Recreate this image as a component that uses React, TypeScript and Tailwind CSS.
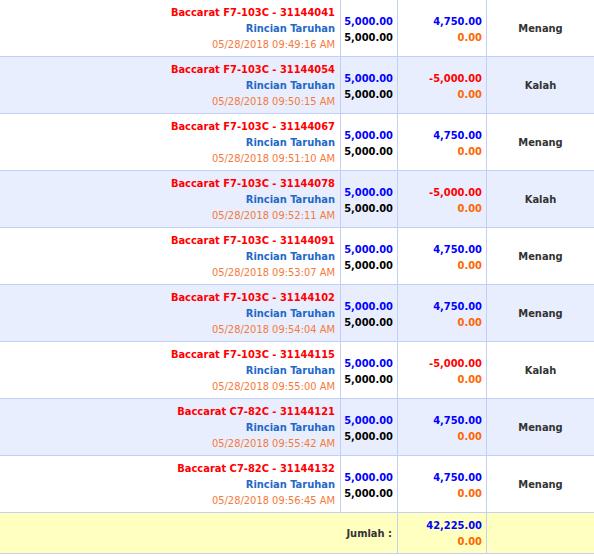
const rows = [
  { game: 'Baccarat F7-103C - 31144041', date: '05/28/2018 09:49:16 AM', win: '4,750.00', result: 'Menang' },
  { game: 'Baccarat F7-103C - 31144054', date: '05/28/2018 09:50:15 AM', win: '-5,000.00', result: 'Kalah' },
  { game: 'Baccarat F7-103C - 31144067', date: '05/28/2018 09:51:10 AM', win: '4,750.00', result: 'Menang' },
  { game: 'Baccarat F7-103C - 31144078', date: '05/28/2018 09:52:11 AM', win: '-5,000.00', result: 'Kalah' },
  { game: 'Baccarat F7-103C - 31144091', date: '05/28/2018 09:53:07 AM', win: '4,750.00', result: 'Menang' },
  { game: 'Baccarat F7-103C - 31144102', date: '05/28/2018 09:54:04 AM', win: '4,750.00', result: 'Menang' },
  { game: 'Baccarat F7-103C - 31144115', date: '05/28/2018 09:55:00 AM', win: '-5,000.00', result: 'Kalah' },
  { game: 'Baccarat C7-82C - 31144121', date: '05/28/2018 09:55:42 AM', win: '4,750.00', result: 'Menang' },
  { game: 'Baccarat C7-82C - 31144132', date: '05/28/2018 09:56:45 AM', win: '4,750.00', result: 'Menang' },
]

export default function App() {
  return (
    <div className="w-[594px] h-[556px] bg-white overflow-hidden font-['DejaVu_Sans_Condensed','DejaVu_Sans',sans-serif] text-[11px] leading-[16px]">
      <div className="grid grid-cols-[341px_57px_89px_107px]">
        {rows.map((r, i) => {
          const bg = i % 2 === 1 ? 'bg-[#e8eefd]' : 'bg-white'
          const neg = r.win.startsWith('-')
          return (
            <div key={i} className="contents">
              {/* bet info */}
              <div className={`${bg} h-[57px] border-r border-b border-[#c3d0f5] pr-[5px] pt-[2px] flex flex-col justify-center items-end text-right`}>
                <div className="font-bold text-[#ff0000]">{r.game}</div>
                <div className="font-bold text-[#1f69c9]">Rincian Taruhan</div>
                <div className="text-[#f47a3c]">{r.date}</div>
              </div>
              {/* stake */}
              <div className={`${bg} h-[57px] border-r border-b border-[#c3d0f5] pr-[4px] pt-[3px] flex flex-col justify-center items-end font-bold`}>
                <div className="text-[#0000ff]">5,000.00</div>
                <div className="text-black">5,000.00</div>
              </div>
              {/* win/loss */}
              <div className={`${bg} h-[57px] border-r border-b border-[#c3d0f5] pr-[4px] pt-[3px] flex flex-col justify-center items-end font-bold`}>
                <div className={neg ? 'text-[#ff0000]' : 'text-[#0000ff]'}>{r.win}</div>
                <div className="text-[#ff6600]">0.00</div>
              </div>
              {/* status */}
              <div className={`${bg} h-[57px] border-b border-[#c3d0f5] pt-[2px] flex items-center justify-center font-bold text-[#333333]`}>
                {r.result}
              </div>
            </div>
          )
        })}

        {/* total */}
        <div className="col-span-2 h-[41px] bg-[#ffffc0] border-r border-b border-[#c3d0f5] pr-[5px] pt-[1px] flex items-center justify-end font-bold text-[#333333]">
          Jumlah :
        </div>
        <div className="h-[41px] bg-[#ffffc0] border-r border-b border-[#c3d0f5] pr-[4px] pt-[1px] flex flex-col justify-center items-end font-bold">
          <div className="text-[#0000ff]">42,225.00</div>
          <div className="text-[#ff6600]">0.00</div>
        </div>
        <div className="h-[41px] bg-[#ffffc0] border-b border-[#c3d0f5]" />
      </div>
    </div>
  )
}
